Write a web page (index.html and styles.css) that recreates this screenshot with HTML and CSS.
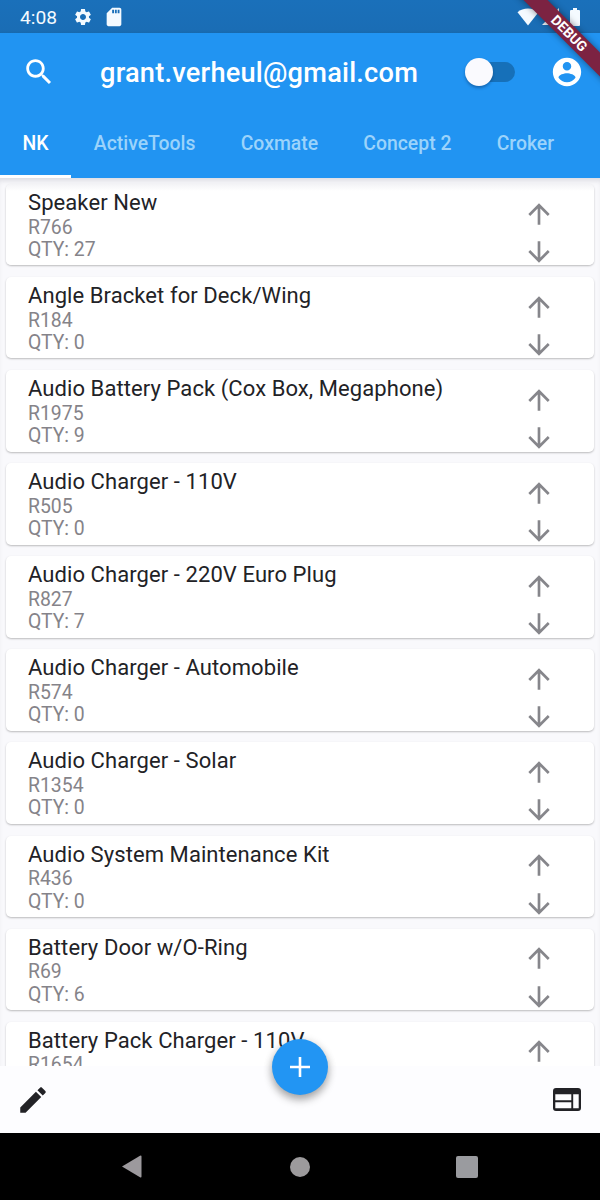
FILE: index.html
```
<!DOCTYPE html>
<html lang="en">
<head>
<meta charset="utf-8">
<title>Inventory</title>
<link rel="stylesheet" href="styles.css">
</head>
<body>
<svg class="defs" width="0" height="0">
  <symbol id="up" viewBox="0 0 24 24"><path d="M4 12l1.410 1.410L11 7.830V20h2V7.830l5.580 5.590L20 12l-8-8-8 8z"/></symbol>
  <symbol id="down" viewBox="0 0 24 24"><path d="M20 12l-1.410-1.410L13 16.170V4h-2v12.170l-5.580-5.590L4 12l8 8 8-8z"/></symbol>
</svg>
<div class="screen">
  <header class="header">
    <div class="status">
      <span class="clock">4:08</span>
      <svg class="gear" viewBox="0 0 24 24"><path d="M19.140 12.940c.04-.3.06-.61.06-.94 0-.32-.02-.64-.07-.94l2.030-1.580c.18-.14.23-.41.12-.61l-1.920-3.320c-.12-.22-.37-.29-.59-.22l-2.390.96c-.5-.38-1.030-.7-1.620-.94l-.36-2.540c-.04-.24-.24-.41-.48-.41h-3.840c-.24 0-.43.17-.47.41l-.36 2.540c-.59.24-1.130.57-1.620.94l-2.390-.96c-.22-.08-.47 0-.59.22L2.740 8.870c-.12.21-.08.47.12.61l2.030 1.580c-.05.3-.09.63-.09.94s.02.64.07.94l-2.030 1.580c-.18.14-.23.41-.12.61l1.920 3.320c.12.22.37.29.59.22l2.390-.96c.5.38 1.030.7 1.620.94l.36 2.540c.05.24.24.41.48.41h3.840c.24 0 .44-.17.47-.41l.36-2.540c.59-.24 1.130-.56 1.620-.94l2.390.96c.22.08.47 0 .59-.22l1.920-3.320c.12-.22.07-.47-.12-.61l-2.010-1.580zM12 15.600c-1.980 0-3.600-1.620-3.600-3.600s1.620-3.600 3.600-3.600 3.600 1.620 3.600 3.600-1.620 3.600-3.600 3.600z"/></svg>
      <svg class="sd" viewBox="0 0 24 24"><path d="M18 2h-8L4.020 8 4 20c0 1.100.9 2 2 2h12c1.100 0 2-.9 2-2V4c0-1.100-.9-2-2-2zm-6 6h-2V4h2v4zm3 0h-2V4h2v4zm3 0h-2V4h2v4z"/></svg>
      <span class="grow"></span>
      <svg class="wifi" viewBox="0 0 22 18"><path d="M11 17.500L.5 4.200C3.300 1.700 7 .5 11 .5s7.700 1.200 10.500 3.700z"/></svg>
      <svg class="signal" viewBox="0 0 17 17"><path d="M0 17L17 0v17z"/></svg>
      <svg class="battery" viewBox="0 0 10 18"><path d="M3 0h4v2h2q1 0 1 1v14q0 1-1 1H1q-1 0-1-1V3q0-1 1-1h2z"/></svg>
    </div>
    <div class="toolbar">
      <svg class="search" viewBox="0 0 24 24"><path d="M15.500 14h-.79l-.28-.27C15.410 12.590 16 11.110 16 9.500 16 5.910 13.090 3 9.500 3S3 5.910 3 9.500 5.910 16 9.500 16c1.610 0 3.090-.59 4.230-1.570l.27.28v.79l5 4.990L20.490 19l-4.990-5zm-6 0C7.010 14 5 11.990 5 9.500S7.010 5 9.500 5 14 7.010 14 9.500 11.990 14 9.500 14z"/></svg>
      <h1 class="email">grant.verheul@gmail.com</h1>
      <span class="switch"><span class="thumb"></span></span>
      <svg class="account" viewBox="0 0 24 24"><path d="M12 2C6.480 2 2 6.480 2 12s4.480 10 10 10 10-4.480 10-10S17.520 2 12 2zm0 3c1.660 0 3 1.340 3 3s-1.340 3-3 3-3-1.340-3-3 1.340-3 3-3zm0 14.200c-2.500 0-4.710-1.280-6-3.220.03-1.990 4-3.080 6-3.080 1.990 0 5.970 1.090 6 3.080-1.290 1.940-3.500 3.220-6 3.220z"/></svg>
    </div>
    <nav class="tabs">
      <span class="tab active">NK</span><span class="tab">ActiveTools</span><span class="tab">Coxmate</span><span class="tab">Concept 2</span><span class="tab">Croker</span>
    </nav>
    <div class="debug"><span>DEBUG</span></div>
  </header>
  <main class="list">
    <article class="card"><div><h2>Speaker New</h2><p>R766</p><p>QTY: 27</p></div><div class="arrows"><svg><use href="#up"/></svg><svg><use href="#down"/></svg></div></article>
    <article class="card"><div><h2>Angle Bracket for Deck/Wing</h2><p>R184</p><p>QTY: 0</p></div><div class="arrows"><svg><use href="#up"/></svg><svg><use href="#down"/></svg></div></article>
    <article class="card"><div><h2>Audio Battery Pack (Cox Box, Megaphone)</h2><p>R1975</p><p>QTY: 9</p></div><div class="arrows"><svg><use href="#up"/></svg><svg><use href="#down"/></svg></div></article>
    <article class="card"><div><h2>Audio Charger - 110V</h2><p>R505</p><p>QTY: 0</p></div><div class="arrows"><svg><use href="#up"/></svg><svg><use href="#down"/></svg></div></article>
    <article class="card"><div><h2>Audio Charger - 220V Euro Plug</h2><p>R827</p><p>QTY: 7</p></div><div class="arrows"><svg><use href="#up"/></svg><svg><use href="#down"/></svg></div></article>
    <article class="card"><div><h2>Audio Charger - Automobile</h2><p>R574</p><p>QTY: 0</p></div><div class="arrows"><svg><use href="#up"/></svg><svg><use href="#down"/></svg></div></article>
    <article class="card"><div><h2>Audio Charger - Solar</h2><p>R1354</p><p>QTY: 0</p></div><div class="arrows"><svg><use href="#up"/></svg><svg><use href="#down"/></svg></div></article>
    <article class="card"><div><h2>Audio System Maintenance Kit</h2><p>R436</p><p>QTY: 0</p></div><div class="arrows"><svg><use href="#up"/></svg><svg><use href="#down"/></svg></div></article>
    <article class="card"><div><h2>Battery Door w/O-Ring</h2><p>R69</p><p>QTY: 6</p></div><div class="arrows"><svg><use href="#up"/></svg><svg><use href="#down"/></svg></div></article>
    <article class="card"><div><h2>Battery Pack Charger - 110V</h2><p>R1654</p></div><div class="arrows"><svg><use href="#up"/></svg></div></article>
  </main>
  <footer class="bottom">
    <svg class="edit" viewBox="0 0 24 24"><path d="M3 17.250V21h3.750L17.810 9.940l-3.750-3.750L3 17.250zM20.710 7.040c.39-.39.39-1.020 0-1.410l-2.340-2.340c-.39-.39-1.020-.39-1.410 0l-1.830 1.830 3.750 3.750 1.830-1.830z"/></svg>
    <svg class="web" viewBox="0 0 28 23"><path fill-rule="evenodd" d="M3 0h22q3 0 3 3v17q0 3-3 3H3q-3 0-3-3V3q0-3 3-3zM2.300 6.300v6h16v-6zM2.300 14.200v6h16v-6zM20.200 6.300v13.900h5.500V6.300z"/></svg>
    <button class="fab" aria-label="Add"><svg viewBox="0 0 20 20"><path d="M8.700 0h2.600v8.700H20v2.600h-8.700V20H8.700v-8.700H0V8.700h8.700z"/></svg></button>
  </footer>
  <div class="navbar">
    <svg class="back" viewBox="0 0 20 23"><path d="M0 11.500L18 .8q1.500-.8 1.500.8v19.800q0 1.600-1.500.8z"/></svg>
    <span class="home"></span>
    <span class="recent"></span>
  </div>
</div>
</body>
</html>
```
FILE: styles.css
```
* { box-sizing: border-box; margin: 0; }
body { font-family: Roboto, sans-serif; background: #000; }
svg { fill: currentColor; display: block; flex: none; }
.defs { position: absolute; }
.screen { width: 600px; height: 1200px; overflow: hidden; display: flex; flex-direction: column; background: #fbfbfd; }
.header { position: relative; z-index: 1; height: 178px; flex: none; overflow: hidden; background: #2194f2; color: #fff; display: flex; flex-direction: column; }
.status { height: 33px; background: linear-gradient(#1a70ba, #1a6db5 90%, #1769ad); display: flex; align-items: center; padding-left: 20px; padding-right: 20px; color: #f4faff; }
.clock { width: 53px; font-size: 19.200px; font-weight: 400; padding-top: 1px; }
.gear { width: 20px; height: 20px; }
.sd { width: 22px; height: 22px; margin-left: 10px; }
.grow { flex: 1; }
.wifi { width: 22px; height: 18px; }
.signal { width: 17px; height: 17px; margin-left: 3px; }
.battery { width: 10px; height: 18px; margin-left: 11px; }
.toolbar { height: 77px; display: flex; align-items: center; padding-left: 22px; }
.search { width: 34px; height: 34px; }
.email { width: 365px; margin-left: 44px; font-size: 27.200px; letter-spacing: .22px; font-weight: 500; line-height: 34px; padding-top: 2px; }
.switch { width: 50px; height: 20px; border-radius: 10px; background: linear-gradient(90deg, transparent 20%, #1670b9 20%); display: flex; align-items: center; }
.thumb { width: 28px; height: 28px; border-radius: 50%; background: #fafafe; box-shadow: 0 2px 3px rgba(0,40,90,.4); }
.account { width: 34px; height: 34px; margin-left: 35px; }
.tabs { height: 68px; display: flex; white-space: nowrap; font-size: 19.400px; font-weight: 500; line-height: 67px; color: #9bd3fb; }
.tab { padding: 0 22.600px; }
.active { color: #fff; border-bottom: 3px solid #fff; }
.debug { position: absolute; right: -48.500px; top: 24.500px; width: 160px; height: 17px; transform: rotate(45deg); background: #7c2342; box-shadow: 0 0 7px rgba(0,0,0,.45); text-align: center; color: #fff; font-size: 14px; font-weight: 700; line-height: 17px; }
.list { height: 888px; flex: none; overflow: hidden; padding: 6px 6px 0; display: flex; flex-direction: column; gap: 11.700px; background: #f9f9fc; box-shadow: inset 0 5px 5px -2px #dddde3; }
.card { height: 81.400px; flex: none; display: flex; justify-content: space-between; border-radius: 5px; background: #fff; padding: 5px 39px 0 22px; box-shadow: 0 1px 2px rgba(0,0,0,.25); }
.card:first-child { background: linear-gradient(#f3f3f6, #fff 7px); }
.card h2 { font-size: 22px; letter-spacing: .08px; font-weight: 400; line-height: 28px; color: #222226; white-space: nowrap; }
.card p { font-size: 19.400px; line-height: 22.500px; color: #858389; position: relative; top: -.5px; }
.arrows { display: flex; flex-direction: column; gap: 6.500px; padding-top: 8.500px; color: #86868b; }
.arrows svg { width: 32px; height: 32px; }
.bottom { position: relative; height: 67px; flex: none; background: #fdfdff; display: flex; align-items: center; justify-content: space-between; padding: 0 19px 0 16px; color: #222226; }
.edit { width: 34px; height: 34px; }
.web { width: 28px; height: 23px; }
.fab { position: absolute; left: 272px; top: -27px; width: 56px; height: 56px; padding: 18px; border: 0; border-radius: 50%; background: #2295f3; color: #fff; box-shadow: 0 5px 8px rgba(0,0,0,.3), 0 1px 10px rgba(0,0,0,.12); }
.fab svg { width: 20px; height: 20px; }
.navbar { height: 67px; flex: none; background: #000; display: flex; align-items: center; padding-left: 122px; color: #9c999d; }
.back { width: 20px; height: 23px; }
.home { width: 20px; height: 20px; margin-left: 148px; border-radius: 50%; background: #9c9a9c; }
.recent { width: 22px; height: 22px; margin-left: 146px; border-radius: 2px; background: #9a9b9f; }
```
